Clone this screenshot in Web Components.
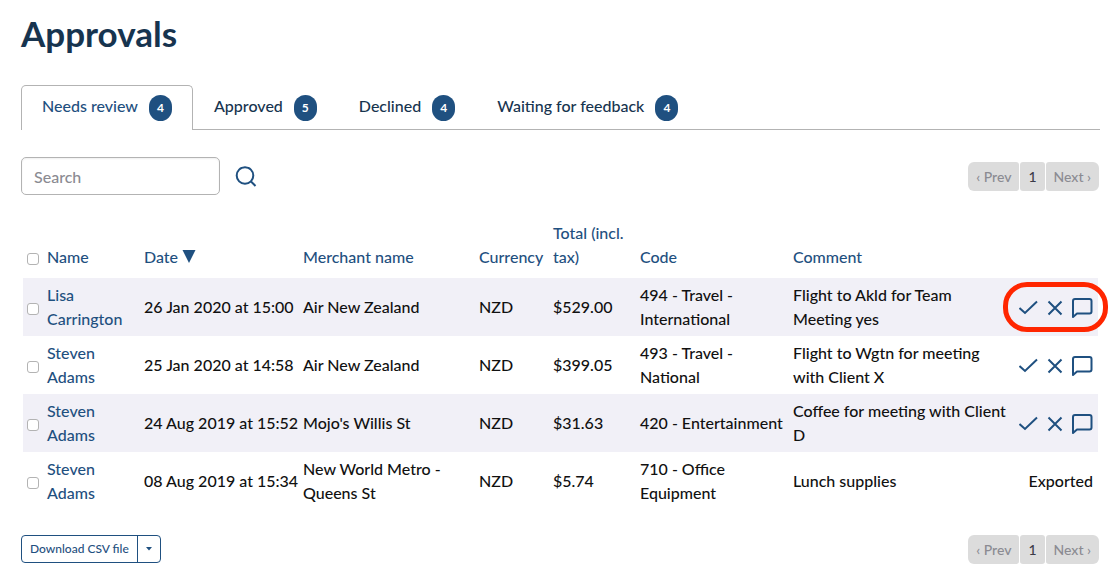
<!DOCTYPE html>
<html lang="en">
<head>
<meta charset="utf-8">
<title>Approvals</title>
<style>
  body { margin: 0; background: #fff; color: #111; font: 16px/24px Lato, "Open Sans", sans-serif; --blue: #1f5080; --navy: #17344f; --line: #b3b3b3; }
</style>
</head>
<body>
<approvals-page></approvals-page>

<template id="page">
  <style>
    :host { display: block; padding: 13px 20px 20px 21px; }
    h1 { margin: 0 0 32px; font-size: 35px; line-height: 40px; font-weight: 700; color: var(--navy); }
    .bar { display: flex; align-items: center; justify-content: space-between; padding-right: 1px; }
    .top { margin: 27px 0 26px; }
    .bottom { margin-top: 25px; align-items: flex-start; }
    approvals-table { margin: 0 2px; }
  </style>
  <h1>Approvals</h1>
  <tab-bar>
    <tab-item count="4" active>Needs review</tab-item>
    <tab-item count="5">Approved</tab-item>
    <tab-item count="4">Declined</tab-item>
    <tab-item count="4">Waiting for feedback</tab-item>
  </tab-bar>
  <div class="bar top"><search-box></search-box><page-nav></page-nav></div>
  <approvals-table></approvals-table>
  <div class="bar bottom"><split-button>Download CSV file</split-button><page-nav></page-nav></div>
</template>

<template id="tab-bar">
  <style>
    :host { display: block; }
    nav { display: flex; box-shadow: inset 0 -1px var(--line); }
  </style>
  <nav aria-label="Approval status"><slot></slot></nav>
</template>

<template id="tab-item">
  <style>
    :host { display: block; }
    a { display: flex; align-items: flex-start; gap: 11px; box-sizing: border-box; height: 45px; padding: 9px 20px 0; border: 1px solid transparent; color: var(--navy); text-decoration: none; font-weight: 500; line-height: 22px; }
    :host([active]) a { color: var(--blue); background: #fff; border-color: var(--line); border-bottom: 0; border-radius: 5px 5px 0 0; }
    .badge { box-sizing: border-box; width: 23px; height: 26px; border-radius: 12px; background: var(--blue); color: #fff; font-size: 12px; line-height: 26px; font-weight: 700; text-align: center; }
  </style>
  <a href="#"><slot></slot><span class="badge"></span></a>
</template>

<template id="search-box">
  <style>
    :host { display: block; }
    form { display: flex; align-items: center; gap: 15px; }
    input { box-sizing: border-box; width: 199px; height: 38px; margin: 0; padding: 0 12px; border: 1px solid var(--line); border-radius: 5px; box-shadow: inset 0 1px 2px #0001; font: inherit; font-weight: 500; color: #111; }
    input::placeholder { color: #8b8b92; opacity: 1; }
    button { display: flex; padding: 0; border: 0; background: none; color: var(--blue); }
  </style>
  <form>
    <input type="text" placeholder="Search" aria-label="Search">
    <button type="button" aria-label="Run search"><svg width="22" height="22" viewBox="0 0 22 22" fill="none" stroke="currentColor" stroke-width="2"><circle cx="10" cy="10.500" r="8.300"/><path d="M16 16.500 20.500 21"/></svg></button>
  </form>
</template>

<template id="page-nav">
  <style>
    :host { display: block; }
    nav { display: flex; gap: 1px; font-size: 14px; line-height: 29px; font-weight: 500; }
    a { padding: 0 8px; border-radius: 3px; background: #dcdcdc; color: #8b8b92; text-decoration: none; }
    a:first-child { border-radius: 6px 3px 3px 6px; }
    a:last-child { border-radius: 3px 6px 6px 3px; }
    a[aria-current] { color: #3b3b48; }
  </style>
  <nav aria-label="Pages"><a href="#">‹ Prev</a><a href="#" aria-current="page">1</a><a href="#">Next ›</a></nav>
</template>

<template id="split-button">
  <style>
    :host { display: block; }
    .group { display: flex; height: 28px; box-sizing: border-box; border: 1px solid var(--blue); border-radius: 4px; }
    button { margin: 0; padding: 0 8px; border: 0; background: none; color: var(--blue); font: inherit; font-size: 12px; font-weight: 500; line-height: 24px; }
    .more { display: flex; align-items: center; border-left: 1px solid var(--blue); padding: 0 7px; }
  </style>
  <div class="group">
    <button type="button"><slot></slot></button>
    <button type="button" class="more" aria-label="More formats"><svg width="8" height="4" viewBox="0 0 8 4"><path d="M1 0h6L4 3.5z" fill="currentColor"/></svg></button>
  </div>
</template>

<template id="row-actions">
  <style>
    :host { display: flex; justify-content: flex-end; position: relative; }
    .icons { display: flex; gap: 8px; }
    button { display: flex; padding: 0; border: 0; background: none; color: var(--blue); }
    svg { fill: none; stroke: currentColor; stroke-width: 2; }
    .ring { display: none; position: absolute; top: -13px; right: -15px; width: 95px; height: 40px; border: 5px solid #ff2600; border-radius: 24px; pointer-events: none; }
    :host([highlight]) .ring { display: block; }
  </style>
  <div class="icons">
    <button type="button" aria-label="Approve"><svg width="20" height="24" viewBox="0 0 20 24"><path d="m.5 13 5.500 5L18 6.500"/></svg></button>
    <button type="button" aria-label="Decline"><svg width="16" height="24" viewBox="0 0 16 24"><path d="m1.500 6.500 13 13M14.500 6.500l-13 13"/></svg></button>
    <button type="button" aria-label="Comment"><svg width="22" height="24" viewBox="0 0 22 24"><path d="M2 22V6a2 2 0 0 1 2-2h14.500a2 2 0 0 1 2 2v10.500a2 2 0 0 1-2 2H6z" stroke-linejoin="round"/></svg></button>
  </div>
  <span class="ring"></span>
</template>

<template id="approvals-table">
  <style>
    :host { display: block; }
    table { width: 100%; table-layout: fixed; border-collapse: collapse; font-weight: 500; }
    th, td { padding: 5px 4px; text-align: left; vertical-align: middle; font-weight: 500; }
    th { padding: 0 4px 9px; vertical-align: bottom; }
    th:nth-child(3), td:nth-child(3), th:nth-child(5), td:nth-child(5) { white-space: nowrap; }
    a { color: var(--blue); text-decoration: none; }
    tbody tr:nth-child(odd) { background: #f1f0f7; }
    td:nth-child(8) { padding-right: 8px; }
    td:last-child { padding: 5px 5px 5px 0; text-align: right; }
    input { appearance: none; box-sizing: border-box; width: 12px; height: 12px; margin: 0; border: 1px solid var(--line); border-radius: 3px; background: #fff; vertical-align: middle; }
    .check { width: 20px; } .name { width: 97px; } .date { width: 159px; } .merchant { width: 176px; }
    .currency { width: 74px; } .total { width: 87px; } .code { width: 153px; } .actions { width: 80px; }
    svg { vertical-align: baseline; }
  </style>
  <table>
    <colgroup><col class="check"><col class="name"><col class="date"><col class="merchant"><col class="currency"><col class="total"><col class="code"><col><col class="actions"></colgroup>
    <thead><tr>
      <th><input type="checkbox" aria-label="Select all"></th>
      <th><a href="#">Name</a></th>
      <th><a href="#">Date <svg width="14" height="13" viewBox="0 0 14 13"><path d="M.5 0h13L7 13z" fill="currentColor"/></svg></a></th>
      <th><a href="#">Merchant name</a></th>
      <th><a href="#">Currency</a></th>
      <th><a href="#">Total (incl. tax)</a></th>
      <th><a href="#">Code</a></th>
      <th><a href="#">Comment</a></th>
      <th></th>
    </tr></thead>
    <tbody></tbody>
  </table>
</template>

<script>
  class Base extends HTMLElement {
    constructor() {
      super();
      this.attachShadow({ mode: "open" }).append(
        document.getElementById(this.constructor.template).content.cloneNode(true));
    }
  }

  const define = (name, template = name) =>
    customElements.define(name, class extends Base { static template = template; });

  customElements.define("tab-item", class extends Base {
    static template = "tab-item";
    connectedCallback() {
      this.shadowRoot.querySelector(".badge").textContent = this.getAttribute("count");
      if (this.hasAttribute("active")) this.shadowRoot.querySelector("a").setAttribute("aria-current", "page");
    }
  });

  const claims = [
    ["Lisa Carrington", "26 Jan 2020 at 15:00", "Air New Zealand", "NZD", "$529.00", "494 - Travel - International", "Flight to Akld for Team Meeting yes", "highlight"],
    ["Steven Adams", "25 Jan 2020 at 14:58", "Air New Zealand", "NZD", "$399.05", "493 - Travel - National", "Flight to Wgtn for meeting with Client X", "open"],
    ["Steven Adams", "24 Aug 2019 at 15:52", "Mojo's Willis St", "NZD", "$31.63", "420 - Entertainment", "Coffee for meeting with Client D", "open"],
    ["Steven Adams", "08 Aug 2019 at 15:34", "New World Metro - Queens St", "NZD", "$5.74", "710 - Office Equipment", "Lunch supplies", "exported"]
  ];

  customElements.define("approvals-table", class extends Base {
    static template = "approvals-table";
    connectedCallback() {
      this.shadowRoot.querySelector("tbody").innerHTML = claims.map(([name, ...rest]) => {
        const state = rest.pop();
        const last = state === "exported" ? "Exported" : `<row-actions ${state === "highlight" ? "highlight" : ""}></row-actions>`;
        return `<tr><td><input type="checkbox" aria-label="Select ${name}"></td><td><a href="#">${name}</a></td>${rest.map(t => `<td>${t}</td>`).join("")}<td>${last}</td></tr>`;
      }).join("");
    }
  });

  ["tab-bar", "search-box", "page-nav", "split-button", "row-actions"].forEach(n => define(n));
  define("approvals-page", "page");
</script>
</body>
</html>
